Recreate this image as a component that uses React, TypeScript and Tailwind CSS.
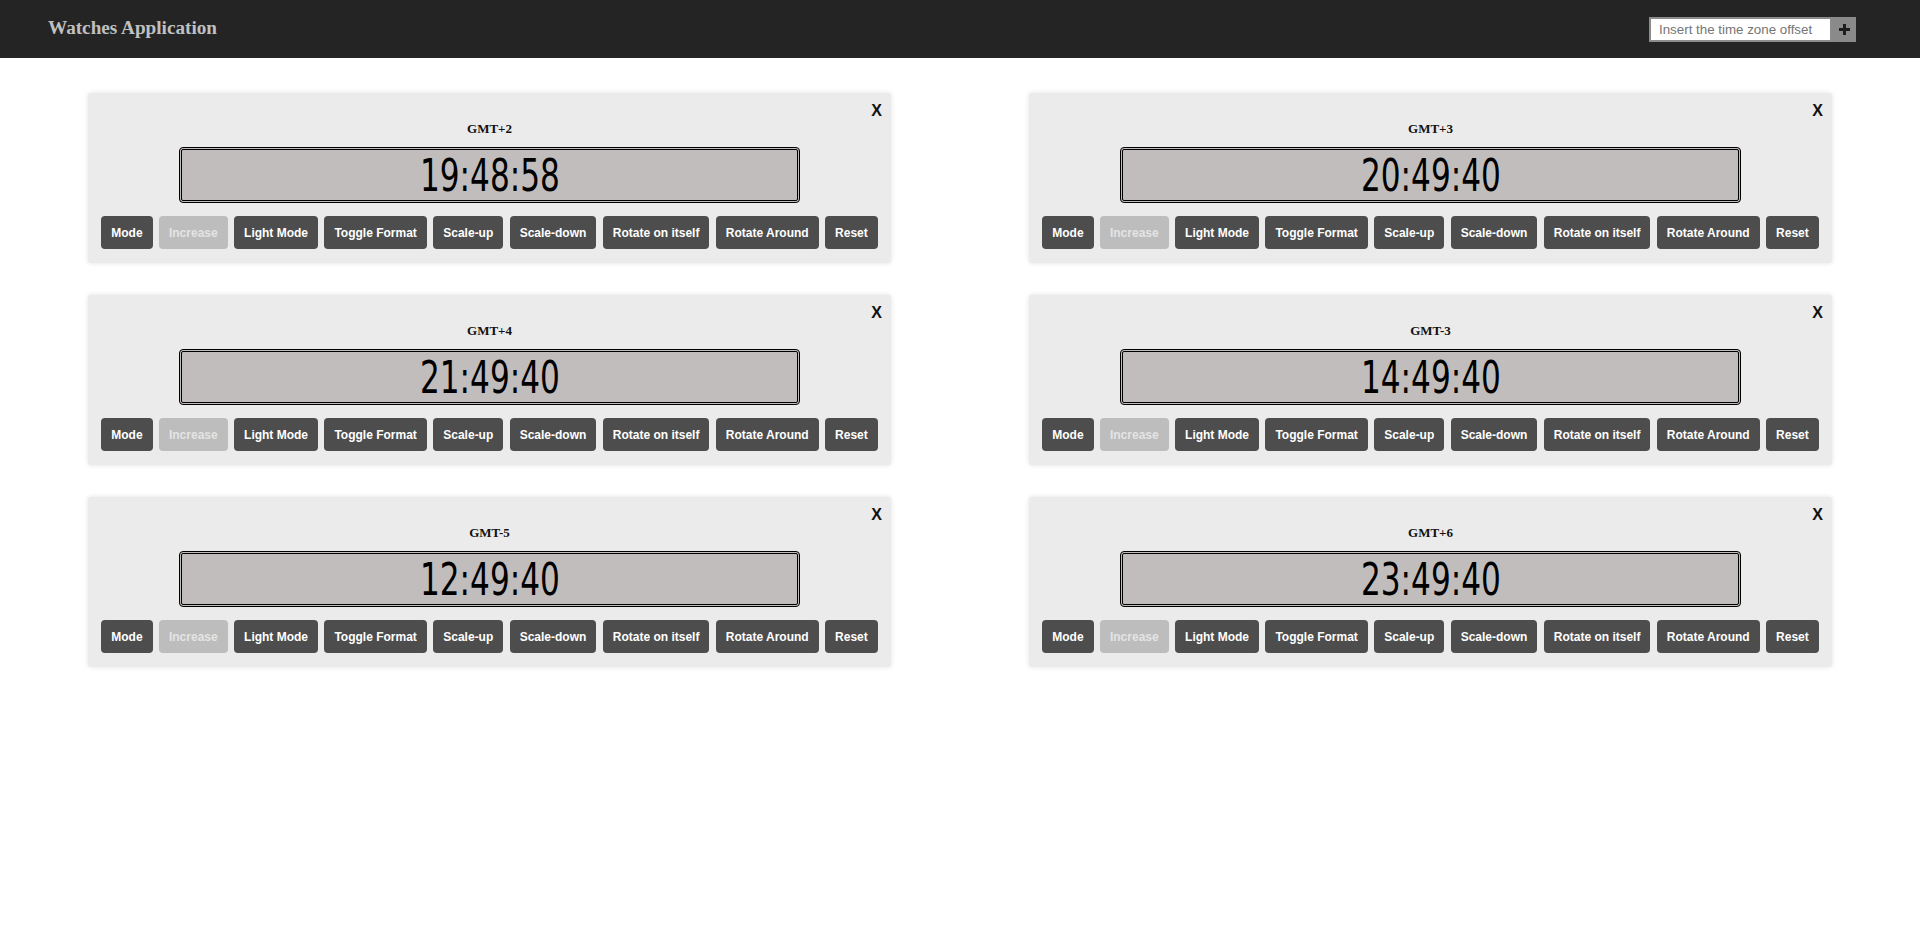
import React from "react";

const watches = [
  { label: "GMT+2", time: "19:48:58" },
  { label: "GMT+3", time: "20:49:40" },
  { label: "GMT+4", time: "21:49:40" },
  { label: "GMT-3", time: "14:49:40" },
  { label: "GMT-5", time: "12:49:40" },
  { label: "GMT+6", time: "23:49:40" },
];

const buttons = [
  "Mode",
  "Increase",
  "Light Mode",
  "Toggle Format",
  "Scale-up",
  "Scale-down",
  "Rotate on itself",
  "Rotate Around",
  "Reset",
];

function Watch({ label, time }: { label: string; time: string }) {
  return (
    <div className="relative bg-[#ecebeb] rounded-[3px] shadow-[0_0_5px_rgba(0,0,0,0.12)] pt-[28px] pb-[14px]">
      <div className="absolute top-[10px] right-[9px] text-[16px] leading-[16px] font-bold text-[#111] font-['Liberation_Sans',Arial,sans-serif]">
        X
      </div>
      <div className="text-center text-[13px] leading-[16px] font-bold text-[#111] font-['Liberation_Serif','Times_New_Roman',serif]">
        {label}
      </div>
      <div className="mx-[91px] mt-[10px] h-[56px] border-[3px] border-double border-black rounded-[4px] bg-[#c0bdbc] flex items-center justify-center">
        <span className="inline-block scale-x-[0.77] text-[45px] leading-none text-black font-['DejaVu_Sans_Condensed','DejaVu_Sans',sans-serif]">
          {time}
        </span>
      </div>
      <div className="mt-[13px] flex justify-center gap-[6.4px]">
        {buttons.map((b) => (
          <button
            key={b}
            className={
              b === "Increase"
                ? "h-[33px] px-[10px] rounded-[4px] bg-[#bdbdbd] text-[#e4e4e4] text-[12px] font-bold font-['Liberation_Sans',Arial,sans-serif]"
                : "h-[33px] px-[10px] rounded-[4px] bg-[#4d4d4d] text-white text-[12px] font-bold font-['Liberation_Sans',Arial,sans-serif]"
            }
          >
            {b}
          </button>
        ))}
      </div>
    </div>
  );
}

export default function App() {
  return (
    <div className="min-h-[933px] bg-white">
      <header className="h-[58px] bg-[#242424] flex items-center justify-between pl-[48px] pr-[64px]">
        <div className="text-[19.2px] font-bold text-[#c0c0c0] font-['Liberation_Serif','Times_New_Roman',serif] -mt-[1px]">
          Watches Application
        </div>
        <div className="flex h-[25px]">
          <input
            placeholder="Insert the time zone offset"
            className="w-[183px] h-[25px] border-2 border-[#8c8c8c] bg-white pl-[8px] text-[13.33px] text-black placeholder:text-[#757575] font-['Liberation_Sans',Arial,sans-serif] outline-none"
          />
          <button className="w-[24px] h-[25px] bg-[#8a8a8a] flex items-center justify-center">
            <svg width="11" height="11" viewBox="0 0 11 11">
              <rect x="4" y="0" width="3" height="11" fill="#1e1e1e" />
              <rect x="0" y="4" width="11" height="3" fill="#1e1e1e" />
            </svg>
          </button>
        </div>
      </header>
      <main className="px-[88px] pt-[35px] grid grid-cols-2 gap-x-[138px] gap-y-[32px]">
        {watches.map((w) => (
          <Watch key={w.label} label={w.label} time={w.time} />
        ))}
      </main>
    </div>
  );
}
